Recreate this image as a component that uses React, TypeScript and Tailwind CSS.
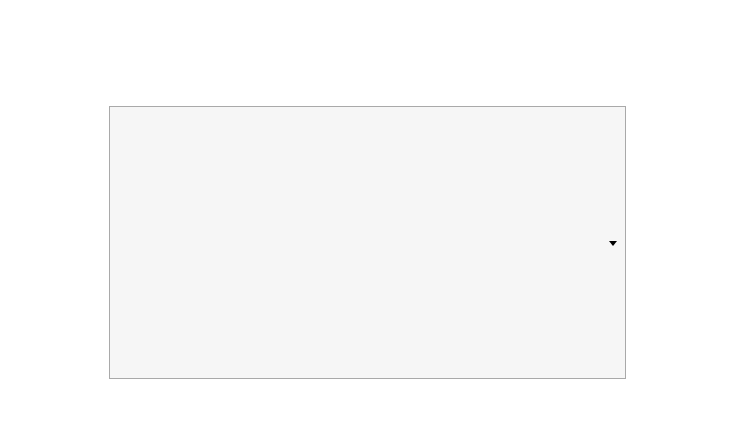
import React from 'react';

export default function App() {
  return (
    <div className="w-[739px] h-[441px] bg-white pt-[106px] pl-[109px]">
      <div className="w-[517px] h-[273px] border border-[#a9a9a9] bg-[#f6f6f6] flex items-center justify-end pr-[8px]">
        <svg width="8" height="5" viewBox="0 0 8 5" className="block mt-[1px]">
          <path d="M0 0 L8 0 L4 5 Z" fill="#000" />
        </svg>
      </div>
    </div>
  );
}
